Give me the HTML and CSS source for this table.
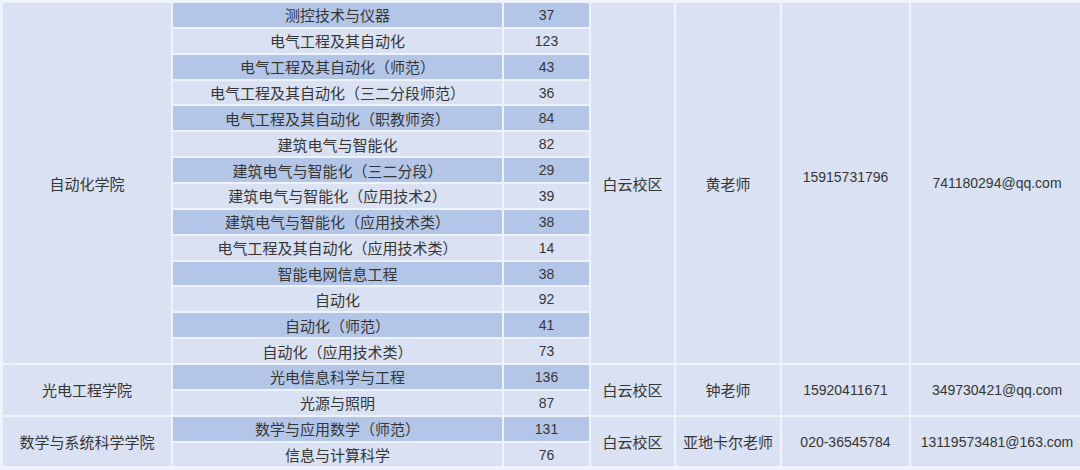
FILE: index.html
```html
<!DOCTYPE html>
<html lang="zh-CN">
<head>
<meta charset="utf-8">
<title>招生表</title>
<link rel="stylesheet" href="styles.css">
</head>
<body>
<div class="sheet">
  <div class="c col1 span14">自动化学院</div>
  <div class="c dark">测控技术与仪器</div>
  <div class="c dark num">37</div>
  <div class="c span14">白云校区</div>
  <div class="c span14">黄老师</div>
  <div class="c span14 num raise">15915731796</div>
  <div class="c span14 num">741180294@qq.com</div>

  <div class="c">电气工程及其自动化</div>
  <div class="c num">123</div>
  <div class="c dark">电气工程及其自动化（师范）</div>
  <div class="c dark num">43</div>
  <div class="c">电气工程及其自动化（三二分段师范）</div>
  <div class="c num">36</div>
  <div class="c dark">电气工程及其自动化（职教师资）</div>
  <div class="c dark num">84</div>
  <div class="c">建筑电气与智能化</div>
  <div class="c num">82</div>
  <div class="c dark">建筑电气与智能化（三二分段）</div>
  <div class="c dark num">29</div>
  <div class="c">建筑电气与智能化（应用技术2）</div>
  <div class="c num">39</div>
  <div class="c dark">建筑电气与智能化（应用技术类）</div>
  <div class="c dark num">38</div>
  <div class="c">电气工程及其自动化（应用技术类）</div>
  <div class="c num">14</div>
  <div class="c dark">智能电网信息工程</div>
  <div class="c dark num">38</div>
  <div class="c">自动化</div>
  <div class="c num">92</div>
  <div class="c dark">自动化（师范）</div>
  <div class="c dark num">41</div>
  <div class="c">自动化（应用技术类）</div>
  <div class="c num">73</div>

  <div class="c col1 span2">光电工程学院</div>
  <div class="c dark">光电信息科学与工程</div>
  <div class="c dark num">136</div>
  <div class="c span2">白云校区</div>
  <div class="c span2">钟老师</div>
  <div class="c span2 num">15920411671</div>
  <div class="c span2 num">349730421@qq.com</div>
  <div class="c">光源与照明</div>
  <div class="c num">87</div>

  <div class="c col1 span2">数学与系统科学学院</div>
  <div class="c dark">数学与应用数学（师范）</div>
  <div class="c dark num">131</div>
  <div class="c span2">白云校区</div>
  <div class="c span2">亚地卡尔老师</div>
  <div class="c span2 num">020-36545784</div>
  <div class="c span2 num">13119573481@163.com</div>
  <div class="c">信息与计算科学</div>
  <div class="c num">76</div>
</div>
</body>
</html>
```

FILE: styles.css
```css
html, body {
  margin: 0;
  padding: 0;
  background: #eef2fa;
  overflow: hidden;
}

.sheet {
  display: grid;
  grid-template-columns: 168px 329px 85px 83px 104px 127px 172px;
  grid-template-rows: repeat(18, 23.86px);
  gap: 2px;
  padding: 3px 0 0 3px;
  width: max-content;
  font-family: "Noto Sans CJK SC", "Liberation Sans", sans-serif;
  font-size: 15px;
  color: #363636;
}

.c {
  background: #d9e1f2;
  display: flex;
  align-items: center;
  justify-content: center;
  white-space: nowrap;
  line-height: 1;
}

.c.dark {
  background: #b4c6e7;
}

.col1 {
  grid-column: 1;
}

.span14 {
  grid-row: span 14;
}

.span2 {
  grid-row: span 2;
}

.num {
  font-family: "Liberation Sans", "Noto Sans CJK SC", sans-serif;
  font-size: 14px;
}

.raise {
  padding-bottom: 13px;
}
```
